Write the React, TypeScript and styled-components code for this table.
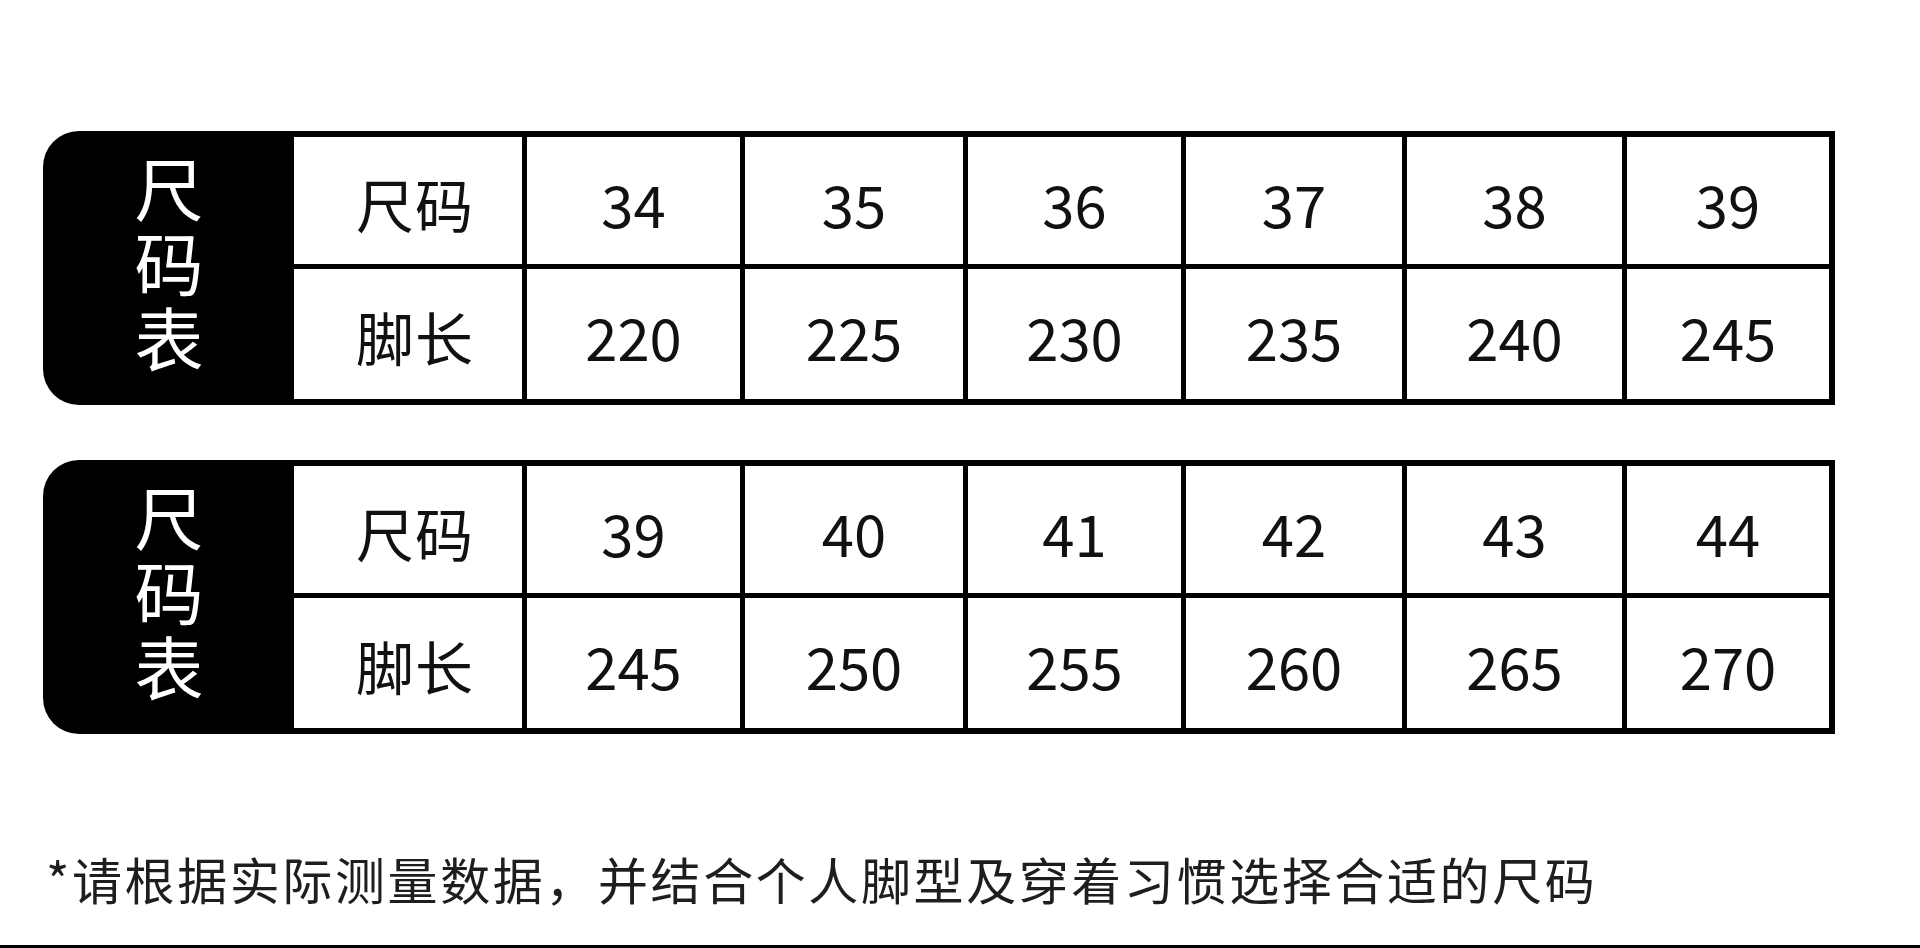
import React from "react";
import styled, { createGlobalStyle } from "styled-components";

const GlobalStyle = createGlobalStyle`
  html, body {
    margin: 0;
    padding: 0;
    background: #ffffff;
  }
  body {
    font-family: "Noto Sans CJK SC", "Noto Sans", sans-serif;
    color: #111111;
  }
`;

const Page = styled.div`
  width: 1920px;
  height: 948px;
  box-sizing: border-box;
  display: flex;
  flex-direction: column;
  background: #ffffff;
  overflow: hidden;
`;

const Tables = styled.div`
  display: flex;
  flex-direction: column;
  gap: 55px;
  padding: 131px 0 0 43px;
`;

const Table = styled.section`
  display: flex;
  height: 274px;
  width: 1792px;
`;

const Side = styled.div`
  width: 251px;
  flex: none;
  box-sizing: border-box;
  padding-bottom: 2px;
  background: #000000;
  border-radius: 36px 0 0 36px;
  display: flex;
  align-items: center;
  justify-content: center;
  color: #ffffff;
`;

const SideTitle = styled.h2`
  margin: 0;
  writing-mode: vertical-rl;
  text-orientation: upright;
  font-size: 69px;
  line-height: 1;
  letter-spacing: 6px;
  font-weight: 400;
`;

const Grid = styled.div`
  flex: 1;
  display: grid;
  grid-template-columns: 228px 213px 218px 213px 216px 215px 202px;
  grid-template-rows: 127px 130px;
  gap: 5px;
  padding: 6px 6px 6px 0;
  background: #000000;
`;

const Cell = styled.div<{ $label?: boolean }>`
  background: #ffffff;
  display: flex;
  align-items: center;
  justify-content: center;
  font-size: 58px;
  line-height: 1;
  color: #111111;
  box-sizing: border-box;
  padding-top: 4px;
  padding-left: ${(p) => (p.$label ? "14px" : "0")};
  letter-spacing: ${(p) => (p.$label ? "1px" : "0")};
`;

const Note = styled.p`
  margin: 0;
  padding: 112px 0 0 46px;
  font-size: 50px;
  line-height: 64px;
  letter-spacing: 2.6px;
  color: #1e1e1e;
  white-space: nowrap;
`;

const Spacer = styled.div`
  flex: 1;
`;

const BottomBar = styled.div`
  height: 3px;
  background: #000000;
  flex: none;
`;

type SizeData = { sizes: string[]; lengths: string[] };

const tables: SizeData[] = [
  {
    sizes: ["34", "35", "36", "37", "38", "39"],
    lengths: ["220", "225", "230", "235", "240", "245"],
  },
  {
    sizes: ["39", "40", "41", "42", "43", "44"],
    lengths: ["245", "250", "255", "260", "265", "270"],
  },
];

function SizeTable({ data }: { data: SizeData }) {
  return (
    <Table>
      <Side>
        <SideTitle>尺码表</SideTitle>
      </Side>
      <Grid>
        <Cell $label>尺码</Cell>
        {data.sizes.map((s, i) => (
          <Cell key={"s" + i}>{s}</Cell>
        ))}
        <Cell $label>脚长</Cell>
        {data.lengths.map((l, i) => (
          <Cell key={"l" + i}>{l}</Cell>
        ))}
      </Grid>
    </Table>
  );
}

export default function App() {
  return (
    <>
      <GlobalStyle />
      <Page>
        <Tables>
          {tables.map((t, i) => (
            <SizeTable key={i} data={t} />
          ))}
        </Tables>
        <Note>*请根据实际测量数据，并结合个人脚型及穿着习惯选择合适的尺码</Note>
        <Spacer />
        <BottomBar />
      </Page>
    </>
  );
}
